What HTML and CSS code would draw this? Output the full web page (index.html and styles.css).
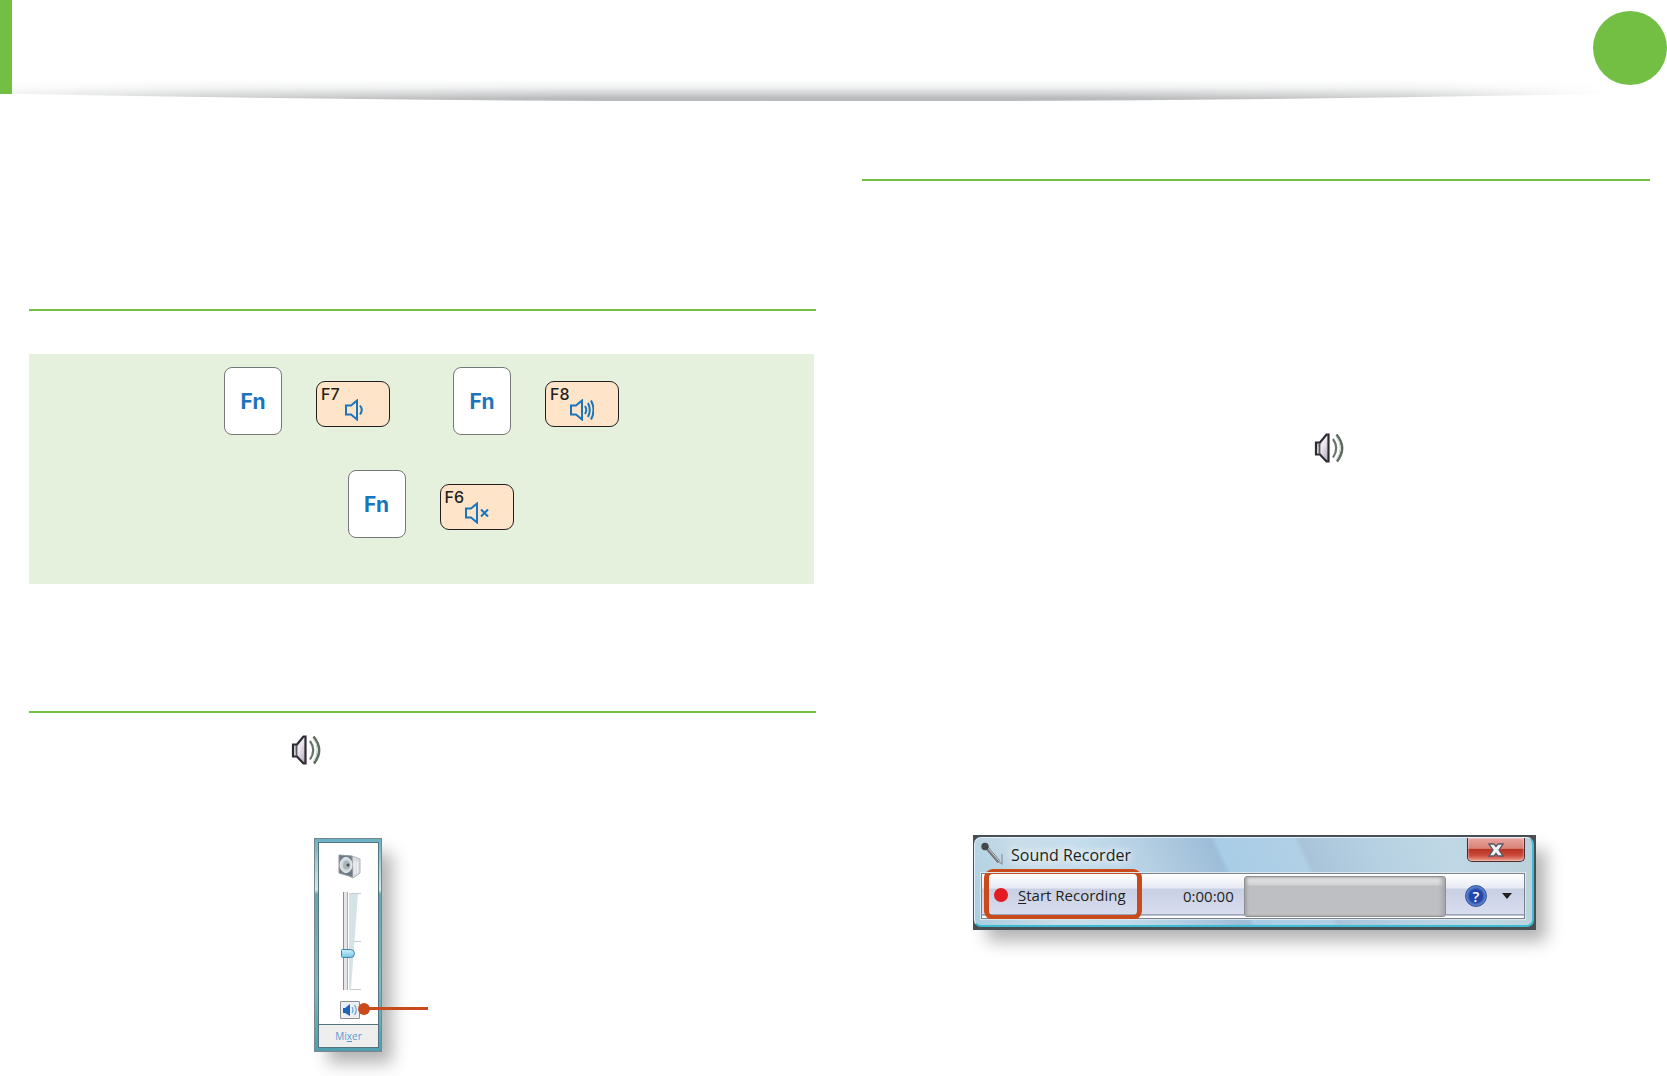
FILE: index.html
```html
<!DOCTYPE html>
<html lang="en">
<head>
<meta charset="utf-8">
<meta name="viewport" content="width=device-width, initial-scale=1">
<title>Sound Recorder</title>
<link rel="stylesheet" href="styles.css">
</head>
<body>
<svg class="defs" aria-hidden="true">
  <defs>
    <linearGradient id="cone" x1="0" y1="0" x2="1" y2="1">
      <stop offset="0" stop-color="#9fb0b4"/><stop offset=".45" stop-color="#f3ecf6"/><stop offset="1" stop-color="#a9a3b4"/>
    </linearGradient>
    <symbol id="speaker" viewBox="0 0 30 30">
      <path d="M2 9.500H6L12.500 1.500H14.500V28.500H12.500L6 21.500H2Z" fill="url(#cone)" stroke="#2d2b31" stroke-width="2.200"/>
      <path d="M5.500 10V21" stroke="#55585c" stroke-width="1.800"/>
      <path d="M19 6Q25.500 15 19 24.500" fill="none" stroke="#66756a" stroke-width="2.200"/>
      <path d="M22.500 1.500Q33.500 15 23 28.500" fill="none" stroke="#5d6b61" stroke-width="2.500"/>
      <path d="M22 3.500Q30.500 15 22 27" fill="none" stroke="#c9d3cb" stroke-width="1"/>
    </symbol>
  </defs>
</svg>

<header class="banner">
  <svg class="banner-shadow" viewBox="0 0 1600 20" preserveAspectRatio="none" aria-hidden="true">
    <defs>
      <linearGradient id="shade" x1="0" y1="0" x2="0" y2="1">
        <stop offset="0" stop-color="#fff"/><stop offset=".35" stop-color="#eff0f0"/><stop offset=".65" stop-color="#d0d1d2"/><stop offset=".85" stop-color="#b8b9bb"/><stop offset="1" stop-color="#bcbdbf"/>
      </linearGradient>
    </defs>
    <path d="M0 0H1600V13Q800 28 0 13Z" fill="url(#shade)"/>
  </svg>
  <span class="banner-dot"></span>
</header>

<main class="columns">
  <div class="column">
    <hr class="rule rule-first">
    <section class="keys" aria-label="Volume keys">
      <div class="key-row">
        <kbd class="key-fn">Fn</kbd>
        <kbd class="key-f">F7
          <svg class="key-icon" viewBox="0 0 24 22" aria-hidden="true"><path d="M5 6.500H10L16 1.500V20.500L10 15.500H5Z"/><path d="M19 6.500Q22.500 11 19 15.500"/></svg>
        </kbd>
        <kbd class="key-fn key-next">Fn</kbd>
        <kbd class="key-f">F8
          <svg class="key-icon" viewBox="0 0 24 22" aria-hidden="true"><path d="M1 6.500H6L12 1.500V20.500L6 15.500H1Z"/><path d="M15 7Q17.500 11 15 15M18 4Q21.500 11 18 18M21 1.500Q26 11 21 20.500"/></svg>
        </kbd>
      </div>
      <div class="key-row key-row-mute">
        <kbd class="key-fn">Fn</kbd>
        <kbd class="key-f">F6
          <svg class="key-icon" viewBox="0 0 24 22" aria-hidden="true"><path d="M1 6.500H6L12 1.500V20.500L6 15.500H1Z"/><path d="M16 7.500L23 14.500M23 7.500L16 14.500"/></svg>
        </kbd>
      </div>
    </section>
    <hr class="rule rule-second">
    <svg class="tray-icon tray-left" role="img" aria-label="Volume"><use href="#speaker"/></svg>

    <section class="mixer" aria-label="Volume control">
      <div class="mixer-body">
        <svg class="device" viewBox="0 0 24 26" aria-hidden="true">
          <path d="M14 3L22 6V20L15 25L11 23Z" fill="#d9dce0" stroke="#b2b6bc"/>
          <path d="M1 2L14 3L14.500 24L1 20Z" fill="#6d7a84" stroke="#8b969e"/>
          <ellipse cx="8" cy="12" rx="6" ry="7.500" fill="#d4dade" stroke="#eef1f3"/>
          <ellipse cx="8.500" cy="12" rx="3.500" ry="4.500" fill="#aab4bb"/>
          <circle cx="10" cy="12" r="1.600" fill="#4f5052"/>
          <path d="M17 8V21M19.500 9V20" stroke="#f5f6f8"/>
        </svg>
        <div class="level">
          <input class="level-input" type="range" min="0" max="100" value="36" aria-label="Volume level">
          <svg class="level-scale" viewBox="0 0 14 98" aria-hidden="true">
            <path d="M0 1H9L2 97H0Z" fill="#d5e3e6"/>
            <path d="M2 1.500H12M5 49.500H12M1 97.500H12" stroke="#c6cbcd"/>
          </svg>
        </div>
        <button class="mute" type="button" aria-label="Mute">
          <svg viewBox="0 0 16 14" aria-hidden="true"><path d="M1 5H3L8 1V13L3 10H1Z" fill="#1e63b4"/><path d="M10 4Q12 7 10 10M12.500 2Q16 7 12.500 12" fill="none" stroke="#6aa4dc" stroke-width="1.300"/></svg>
        </button>
      </div>
      <a class="mixer-link" href="#">Mi<u>x</u>er</a>
      <span class="callout"></span>
    </section>
  </div>

  <div class="column">
    <hr class="rule rule-right">
    <svg class="tray-icon tray-right" role="img" aria-label="Volume"><use href="#speaker"/></svg>

    <section class="recorder" aria-label="Sound Recorder">
      <div class="recorder-frame">
        <div class="titlebar">
          <svg class="mic" viewBox="0 0 24 24" aria-hidden="true">
            <path d="M5 5L18 20" stroke="#77797c" stroke-width="3.500"/>
            <path d="M6 5L19 20" stroke="#d3d6d8" stroke-width="1"/>
            <path d="M18 20L21 22V12" fill="none" stroke="#8793a0" stroke-width="1.200"/>
            <circle cx="4" cy="4.500" r="3.700" fill="#46474b"/>
          </svg>
          <span class="title">Sound Recorder</span>
          <button class="close" type="button" aria-label="Close">
            <svg viewBox="0 0 16 14" aria-hidden="true"><path d="M1 1H6L8 3.500L10 1H15L11 7L15 13H10L8 10.500L6 13H1L5 7Z" fill="#f2f2f2" stroke="#555b66" stroke-width="1.300"/></svg>
          </button>
        </div>
        <div class="toolbar">
          <button class="record" type="button"><span class="record-dot"></span><span><u>S</u>tart Recording</span></button>
          <time class="elapsed">0:00:00</time>
          <div class="meter"></div>
          <button class="help" type="button">?</button>
          <button class="more" type="button" aria-label="More options"></button>
        </div>
      </div>
    </section>
  </div>
</main>
</body>
</html>
```
FILE: styles.css
```css
* { box-sizing: border-box; }

body {
  margin: 0;
  background: #fff;
  color: #231f20;
  font-family: "Open Sans", "Noto Sans", sans-serif;
}

button {
  margin: 0;
  padding: 0;
  border: 0;
  background: none;
  color: inherit;
  font: inherit;
}

kbd { font-family: Inter, "Liberation Sans", sans-serif; }

.defs {
  position: absolute;
  width: 0;
  height: 0;
}

/* Banner */
.banner {
  position: relative;
  display: flex;
  justify-content: flex-end;
  height: 94px;
  padding-top: 11px;
  border-left: 12px solid #72bf44;
}

.banner-shadow {
  position: absolute;
  top: 80px;
  left: 0;
  width: calc(100% - 60px);
  height: 21px;
  mask-image: linear-gradient(to right, rgb(0 0 0 / .25), rgb(0 0 0 / .7) 12%, #000 35%, #000 68%, rgb(0 0 0 / .7) 88%, transparent);
}

.banner-dot {
  width: 74px;
  height: 74px;
  border-radius: 50%;
  background: #72bf44;
}

/* Two-column sheet */
.columns {
  display: grid;
  grid-template-columns: 787fr 788fr;
  column-gap: 46px;
  padding: 0 17px 24px 29px;
}

.column {
  display: flex;
  flex-direction: column;
  align-items: flex-start;
}

.rule {
  width: 100%;
  height: 2px;
  margin: 0;
  border: 0;
  background: #72bf44;
}

.rule-first { margin: 215px 0 43px; }
.rule-second { margin: 127px 0 22px; }
.rule-right { margin: 85px 0 252px; }

/* Keyboard shortcuts */
.keys {
  display: flex;
  flex-direction: column;
  gap: 35px;
  width: calc(100% - 2px);
  padding: 13px 0 46px;
  background: #e5f1dd;
}

.key-row {
  display: flex;
  align-items: center;
  justify-content: center;
  gap: 34px;
}

.key-row-mute { padding-left: 18px; }

.key-next { margin-left: 29px; }

.key-fn {
  display: grid;
  place-items: center;
  width: 58px;
  height: 68px;
  border: 1px solid #77787b;
  border-radius: 8px;
  background: #fff;
  color: #1b75bc;
  font-size: 21px;
  font-weight: 700;
}

.key-f {
  display: flex;
  flex-direction: column;
  width: 74px;
  height: 46px;
  margin-top: 6px;
  padding: 4px;
  border: 1px solid #231f20;
  border-radius: 9px;
  background: #fee4c9;
  font-size: 16px;
  font-weight: 500;
  line-height: 17px;
}

.key-icon {
  align-self: center;
  flex: none;
  width: 24px;
  height: 22px;
  margin-top: -4px;
  fill: none;
  stroke: #1b75bc;
  stroke-width: 2;
}

/* Notification-area speaker */
.tray-icon {
  width: 30px;
  height: 30px;
}

.tray-left { margin-left: 262px; }
.tray-right { margin-left: 452px; }

/* Volume popup */
.mixer {
  position: relative;
  display: flex;
  flex-direction: column;
  width: 68px;
  height: 214px;
  margin: 73px 0 0 285px;
  padding: 3px 2px 3px 3px;
  border: 1px solid #77878c;
  background: linear-gradient(#6bb0c4, #a9ccd6 12%, #dbe6e8 24%, #69a5ae 26%, #7db7c0 70%, #4f9eaf);
  box-shadow: 12px 13px 16px -2px rgb(0 0 0 / .3);
}

.mixer-body {
  display: flex;
  flex: 1;
  flex-direction: column;
  align-items: center;
  padding: 10px 0 5px 2px;
  border: 1px solid #52747d;
  background: #fff;
}

.device {
  width: 24px;
  height: 26px;
}

.level {
  display: flex;
  height: 98px;
  margin: 13px 0 11px 4px;
}

.level-input {
  width: 14px;
  height: 98px;
  margin: 0 -6px 0 0;
  appearance: none;
  background: linear-gradient(to right, transparent 2px, #8d8d8d 2px 3px, #e6e4e4 3px 6px, #aaa 6px 7px, transparent 7px);
  direction: rtl;
  writing-mode: vertical-lr;
  z-index: 1;
}

.level-input::-webkit-slider-thumb {
  width: 14px;
  height: 9px;
  appearance: none;
  border: 1px solid #3b85ab;
  border-radius: 2px 6px 6px 2px;
  background: linear-gradient(#c9edfa, #7cc8e8);
}

.level-scale {
  width: 14px;
  height: 98px;
}

.mute {
  display: grid;
  place-items: center;
  width: 20px;
  height: 18px;
  border: 1px solid #8d8e90;
  border-radius: 1px;
  background: #eceff3;
}

.mute svg {
  width: 16px;
  height: 14px;
}

.mixer-link {
  height: 24px;
  border: 1px solid #52747d;
  border-top: 0;
  background: #eeeeef;
  color: #559bd2;
  font-size: 10px;
  line-height: 22px;
  text-align: center;
  text-decoration: none;
}

.callout {
  position: absolute;
  top: 168px;
  left: 49px;
  width: 64px;
  height: 3px;
  background: #c94a1b;
}

.callout::before {
  position: absolute;
  top: -4px;
  left: -6px;
  width: 12px;
  height: 12px;
  border-radius: 50%;
  background: #c94a1b;
  content: "";
}

/* Sound Recorder window */
.recorder {
  width: 563px;
  margin: 372px 0 0 111px;
  padding: 2px 2px 3px 1px;
  background: #494e52;
  box-shadow: 12px 13px 16px -2px rgb(0 0 0 / .3);
}

.recorder-frame {
  padding: 0 7px 6px 6px;
  border: 1px solid #e4f1f8;
  border-right: 2px solid #3fbcd5;
  border-bottom: 2px solid #3fbcd5;
  border-radius: 7px;
  background: linear-gradient(65deg, #a9cde0, #c9dde9 14%, #c3dcec 25%, #b5cfe3 34%, #9dbdd8 46%, #a9cde6 47%, #b0d0e6 60%, #a9c3d9 61%, #b5d0e2 72%, #c0d8e5 85%, #bacfd9);
}

.titlebar {
  display: flex;
  align-items: flex-start;
  height: 35px;
}

.mic {
  width: 24px;
  height: 24px;
  margin-top: 4px;
}

.title {
  flex: 1;
  padding: 5px 0 0 6px;
  font-size: 16px;
  line-height: 24px;
  text-shadow: 0 0 8px #fff, 0 0 8px #fff;
}

.close {
  display: grid;
  place-items: center;
  width: 58px;
  height: 24px;
  border: 1px solid #4b2c2e;
  border-top: 0;
  border-radius: 0 0 5px 5px;
  background: linear-gradient(#e8a49c, #d98277 45%, #b93425 50%, #c94939 75%, #ef9b8d);
  box-shadow: inset 0 0 2px #fff;
}

.close svg {
  width: 16px;
  height: 14px;
}

.toolbar {
  display: flex;
  align-items: center;
  height: 46px;
  border: 1px solid #77828c;
  outline: 1px solid #dce8f0;
  background: linear-gradient(#fff, #e7eaf3 32%, #c9d0e4 34%, #d8ddee 92%, #9ea5bb 92% 94%, #fff 95%);
  font-size: 15px;
  font-weight: 500;
}

.record {
  display: flex;
  align-items: center;
  gap: 10px;
  width: 158px;
  height: 51px;
  margin: -3px 0 0 2px;
  padding-left: 5px;
  border: 5px solid #c94a1b;
  border-radius: 9px;
  white-space: nowrap;
}

.record-dot {
  flex: none;
  width: 14px;
  height: 14px;
  border-radius: 50%;
  background: #e31b23;
}

.record u { text-underline-offset: 2px; }

.elapsed {
  width: 61px;
  margin-left: 41px;
}

.meter {
  flex: 1;
  height: 41px;
  border: 1px solid #8d8e91;
  border-radius: 3px;
  background: linear-gradient(#ededee, #d0d1d3 20%, #bebfc2 24%, #bebfc2 88%, #cdced0);
  box-shadow: inset 2px 0 3px #a4a5a8, inset -3px 0 4px #a4a5a8;
}

.help {
  width: 22px;
  height: 22px;
  margin-left: 19px;
  border: 1px solid #33549c;
  border-radius: 50%;
  background: radial-gradient(circle, #2347a6 45%, #5b82cf 65%, #2a51a5);
  color: #fff;
  font-size: 15px;
  font-weight: 600;
  line-height: 20px;
}

.more {
  width: 10px;
  height: 6px;
  margin: 0 12px 0 15px;
  background: #231f20;
  clip-path: polygon(0 0, 100% 0, 50% 100%);
}
```
